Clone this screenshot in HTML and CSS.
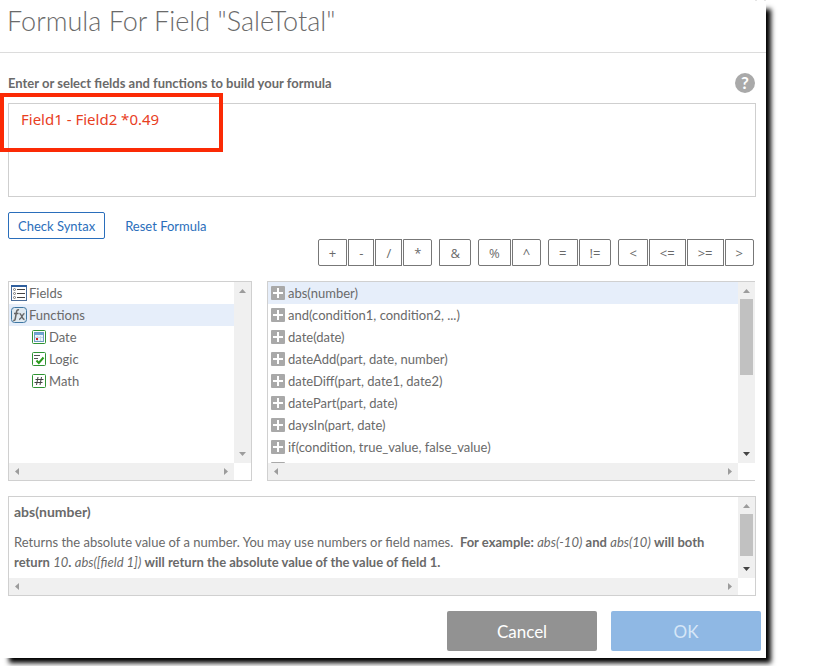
FILE: index.html
```html
<!DOCTYPE html>
<html lang="en">
<head>
    <meta charset="UTF-8">
    <meta name="viewport" content="width=device-width, initial-scale=1.0">
    <title>Formula For Field</title>
    <link rel="stylesheet" href="styles.css">
</head>
<body>
    <!-- shared icons -->
    <svg width="0" height="0" class="sprite" aria-hidden="true">
        <symbol id="icon-add" viewBox="0 0 14 14">
            <rect width="14" height="14" rx="1" fill="#a9a9a9"/>
            <path d="M7 2v10M2 7h10" stroke="#fff" stroke-width="2"/>
        </symbol>
        <symbol id="icon-up" viewBox="0 0 17 17">
            <path d="M5 11h7L8.500 7z"/>
        </symbol>
        <symbol id="icon-down" viewBox="0 0 17 17">
            <path d="M5 6h7l-3.500 4z"/>
        </symbol>
        <symbol id="icon-left" viewBox="0 0 17 17">
            <path d="M10 5v7L6 8.500z"/>
        </symbol>
        <symbol id="icon-right" viewBox="0 0 17 17">
            <path d="M7 5v7l4-3.500z"/>
        </symbol>
    </svg>

    <div class="dialog">
        <button class="close" aria-label="Close">
            <svg width="11" height="11" viewBox="0 0 11 11"><path d="M1 1l9 9.500M10 1L1 10.500" stroke="#999" fill="none"/></svg>
        </button>
        <div class="dialog-header">
            <h1>Formula For Field "SaleTotal"</h1>
        </div>

        <div class="dialog-body">
            <div class="label-row">
                <label for="formula">Enter or select fields and functions to build your formula</label>
                <button class="help" aria-label="Help">?</button>
            </div>
            <div class="formula-box">
                <textarea id="formula" spellcheck="false">Field1 - Field2 *0.49</textarea>
                <div class="highlight"></div>
            </div>

            <div class="actions">
                <button class="check">Check Syntax</button>
                <a class="reset" href="#">Reset Formula</a>
            </div>

            <div class="operators">
                <div class="group">
                    <button>+</button>
                    <button>-</button>
                    <button>/</button>
                    <button>*</button>
                </div>
                <div class="group">
                    <button>&amp;</button>
                </div>
                <div class="group">
                    <button>%</button>
                    <button>^</button>
                </div>
                <div class="group">
                    <button>=</button>
                    <button>!=</button>
                </div>
                <div class="group">
                    <button>&lt;</button>
                    <button>&lt;=</button>
                    <button>&gt;=</button>
                    <button>&gt;</button>
                </div>
            </div>

            <div class="panels">
                <div class="panel tree-panel">
                    <ul class="list tree">
                        <li>
                            <svg width="16" height="16" viewBox="0 0 16 16">
                                <rect x=".5" y=".5" width="15" height="15" fill="#fff" stroke="#4a6c99"/>
                                <path d="M0 1h16" stroke="#2f5f9e" stroke-width="2"/>
                                <path d="M6 4.500h8M6 8.500h8M6 12.500h8" stroke="#444"/>
                                <g fill="#fff" stroke="#777"><circle cx="3.500" cy="4.500" r="1"/><circle cx="3.500" cy="8.500" r="1"/><circle cx="3.500" cy="12.500" r="1"/></g>
                            </svg>
                            Fields
                        </li>
                        <li class="selected">
                            <svg width="16" height="16" viewBox="0 0 16 16">
                                <rect x=".5" y=".5" width="15" height="15" rx="3" fill="#dfe9f0" stroke="#3f77a3"/>
                                <path d="M8 3c-1.500-.6-2.200.3-2.500 2L4.200 12c-.2 1.200-.8 1.700-1.900 1.300M3 6.500h4.500M8.500 6.500c2 0 2.500 6 5 6M13.500 6.500c-2 0-3 6-5.500 6" fill="none" stroke="#666" stroke-width="1.500"/>
                            </svg>
                            Functions
                        </li>
                        <li class="child">
                            <svg width="14" height="14" viewBox="0 0 14 14">
                                <rect x=".5" y=".5" width="13" height="13" rx="1" fill="#fff" stroke="#2f9333"/>
                                <rect x="2.500" y="2.500" width="9" height="9" fill="#eaf3fa" stroke="#6f9cc0"/>
                                <path d="M3 4h8" stroke="#6fa6d6" stroke-width="2"/>
                                <path d="M5.500 6v5M8.500 6v5M3 7.500h8" stroke="#c3d8e8"/>
                                <rect x="4" y="8" width="2" height="2" fill="#c22"/>
                            </svg>
                            Date
                        </li>
                        <li class="child">
                            <svg width="14" height="14" viewBox="0 0 14 14">
                                <rect x=".5" y=".5" width="13" height="13" rx="1" fill="#fff" stroke="#2f9333"/>
                                <path d="M2 3.500h6M2 6.500h4" stroke="#555"/>
                                <path d="M4.500 8.500l2.300 2.500L11.500 5.500" fill="none" stroke="#2a9a1c" stroke-width="2"/>
                            </svg>
                            Logic
                        </li>
                        <li class="child">
                            <svg width="14" height="14" viewBox="0 0 14 14">
                                <rect x=".5" y=".5" width="13" height="13" rx="1" fill="#fff" stroke="#2f9333"/>
                                <path d="M6 3L4.500 11M9.500 3L8 11M3.500 5.500h8M2.500 8.500h8" stroke="#444" fill="none"/>
                            </svg>
                            Math
                        </li>
                    </ul>
                    <div class="vbar" aria-hidden="true">
                        <svg class="arrow"><use href="#icon-up"/></svg>
                        <svg class="arrow"><use href="#icon-down"/></svg>
                    </div>
                    <div class="hbar" aria-hidden="true">
                        <svg class="arrow"><use href="#icon-left"/></svg>
                        <svg class="arrow"><use href="#icon-right"/></svg>
                    </div>
                </div>

                <div class="panel functions-panel">
                    <ul class="list functions">
                        <li class="selected"><svg width="14" height="14"><use href="#icon-add"/></svg>abs(number)</li>
                        <li><svg width="14" height="14"><use href="#icon-add"/></svg>and(condition1, condition2, ...)</li>
                        <li><svg width="14" height="14"><use href="#icon-add"/></svg>date(date)</li>
                        <li><svg width="14" height="14"><use href="#icon-add"/></svg>dateAdd(part, date, number)</li>
                        <li><svg width="14" height="14"><use href="#icon-add"/></svg>dateDiff(part, date1, date2)</li>
                        <li><svg width="14" height="14"><use href="#icon-add"/></svg>datePart(part, date)</li>
                        <li><svg width="14" height="14"><use href="#icon-add"/></svg>daysIn(part, date)</li>
                        <li><svg width="14" height="14"><use href="#icon-add"/></svg>if(condition, true_value, false_value)</li>
                        <li><svg width="14" height="14"><use href="#icon-add"/></svg></li>
                    </ul>
                    <div class="vbar" aria-hidden="true">
                        <svg class="arrow"><use href="#icon-up"/></svg>
                        <div class="thumb"></div>
                        <svg class="arrow active"><use href="#icon-down"/></svg>
                    </div>
                    <div class="hbar" aria-hidden="true">
                        <svg class="arrow"><use href="#icon-left"/></svg>
                        <svg class="arrow"><use href="#icon-right"/></svg>
                    </div>
                </div>
            </div>

            <div class="panel help-panel">
                <div class="description">
                    <h2>abs(number)</h2>
                    <p>Returns the absolute value of a number. You may use numbers or field names. &nbsp;<b>For example:</b> <i>abs(-10)</i> <b>and</b> <i>abs(10)</i> <b>will both return</b> <i>10</i><b>.</b> <i>abs([field 1])</i> <b>will return the absolute value of the value of field 1.</b></p>
                </div>
                <div class="vbar" aria-hidden="true">
                    <svg class="arrow"><use href="#icon-up"/></svg>
                    <div class="thumb"></div>
                    <svg class="arrow active"><use href="#icon-down"/></svg>
                </div>
                <div class="hbar" aria-hidden="true">
                    <svg class="arrow"><use href="#icon-left"/></svg>
                    <svg class="arrow"><use href="#icon-right"/></svg>
                </div>
            </div>
        </div>

        <div class="dialog-footer">
            <button class="cancel">Cancel</button>
            <button class="ok" disabled>OK</button>
        </div>
    </div>
</body>
</html>
```
FILE: styles.css
```css
* {
    box-sizing: border-box;
}

body {
    margin: 0;
    background-color: white;
    color: #6a6a6a;
    font-family: Lato, sans-serif;
    font-size: 13px;
    line-height: 20px;
}

button {
    font-family: inherit;
    cursor: pointer;
}

.sprite {
    position: absolute;
}

.dialog {
    position: relative;
    margin: 0 64px 8px 0;
    background-color: white;
    box-shadow: 7px 7px 5px -2px black;
}

.close {
    position: absolute;
    top: -10px;
    right: 0;
    padding: 0;
    border: 0;
    background: none;
    line-height: 0;
}

.dialog-header {
    padding: 1px 7px 11px;
    border-bottom: 1px solid #dcdcdc;
}

.dialog-header h1 {
    margin: 0;
    font-size: 27px;
    font-weight: 300;
    line-height: 40px;
}

.dialog-body {
    padding: 20px 10px 0 8px;
}

.label-row {
    display: flex;
    justify-content: space-between;
    align-items: center;
    margin-bottom: 10px;
    padding-right: 1px;
}

.label-row label {
    font-weight: bold;
}

.help {
    width: 20px;
    height: 20px;
    padding: 0;
    border: 0;
    border-radius: 50%;
    background-color: #a9a9a9;
    color: white;
    font-size: 17px;
    font-weight: bold;
    line-height: 20px;
}

.formula-box {
    position: relative;
    margin-bottom: 15px;
}

.formula-box textarea {
    display: block;
    width: 100%;
    height: 94px;
    padding: 5px 12px;
    border: 1px solid #cfcfcf;
    outline: none;
    resize: none;
    color: #e8401f;
    font-family: "Noto Sans", sans-serif;
    font-size: 15px;
    line-height: 20px;
}

/* red frame round the formula */
.highlight {
    position: absolute;
    top: -10px;
    left: -8px;
    width: 223px;
    height: 59px;
    border: 4px solid #fb2a05;
    pointer-events: none;
}

.actions {
    display: flex;
    align-items: center;
    gap: 20px;
}

.check {
    height: 27px;
    padding: 0 9px;
    border: 1px solid #2a6ebb;
    border-radius: 2px;
    background-color: white;
    color: #2a6ebb;
    font-size: 13px;
}

.reset {
    color: #2a6ebb;
    text-decoration: none;
}

.operators {
    display: flex;
    justify-content: flex-end;
    gap: 7px;
    margin: 0 2px 15px;
}

.group {
    display: flex;
    gap: 1px;
}

.group button {
    height: 27px;
    padding: 0 10px;
    border: 1px solid #777;
    background-color: white;
    color: #6a6a6a;
    font-family: "Open Sans", sans-serif;
    font-size: 13px;
}

.group button:first-child {
    border-radius: 2px 0 0 2px;
}

.group button:last-child {
    border-radius: 0 2px 2px 0;
}

.panels {
    display: grid;
    grid-template-columns: 1fr 2fr;
    gap: 15px;
    margin-bottom: 15px;
    padding-right: 1px;
}

.panel {
    display: grid;
    grid-template-columns: 1fr 17px;
    grid-template-rows: 1fr 17px;
    border: 1px solid #d0d0d0;
}

.tree-panel,
.functions-panel {
    height: 200px;
}

.functions-panel {
    border-right: 0;
}

.list {
    margin: 0;
    padding: 0;
    overflow: hidden;
    list-style: none;
}

.list li {
    display: flex;
    align-items: center;
    gap: 2px;
    height: 22px;
    padding-left: 2px;
}

.list .child {
    gap: 3px;
    padding-left: 23px;
}

.list .selected {
    background-color: #e6eefa;
}

.functions li {
    gap: 3px;
    padding-left: 3px;
}

.vbar,
.hbar {
    display: flex;
    justify-content: space-between;
    background-color: #f0f0f0;
}

.vbar {
    flex-direction: column;
}

.arrow {
    flex: none;
    width: 17px;
    height: 17px;
    fill: #9c9c9c;
}

.arrow.active {
    fill: #444;
}

.thumb {
    height: 76px;
    margin: 0 2px auto;
    background-color: #c1c1c1;
}

.help-panel .thumb {
    height: 42px;
}

.description {
    height: 81px;
    padding: 5px;
    overflow: hidden;
}

.description h2 {
    margin: 0 0 10px;
    font-size: 14px;
    line-height: 20px;
}

.description p {
    margin: 0;
}

.dialog-footer {
    display: flex;
    justify-content: flex-end;
    gap: 14px;
    padding: 15px 5px 7px;
}

.dialog-footer button {
    width: 150px;
    height: 40px;
    border: 0;
    border-radius: 2px;
    color: white;
    font-size: 17px;
}

.cancel {
    background-color: #929292;
}

.dialog-footer .ok {
    background-color: #8fb8e4;
    color: #d6e6f7;
}
```
